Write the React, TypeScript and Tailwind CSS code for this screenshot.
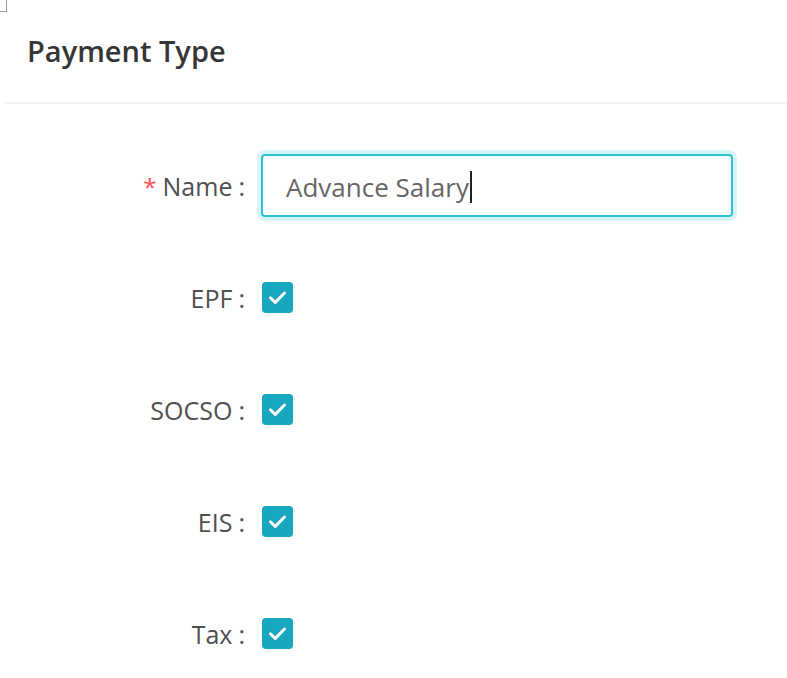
import React from "react";

const font = { fontFamily: '"Open Sans", "Noto Sans", sans-serif' };

function Check() {
  return (
    <span className="flex h-[31px] w-[31px] items-center justify-center rounded-[4px] bg-[#17a7bf]">
      <svg width="31" height="31" viewBox="0 0 31 31" fill="none">
        <path d="M8.5 15.8 L13.3 20.4 L22.5 11" stroke="white" strokeWidth="3" strokeLinecap="round" strokeLinejoin="round" />
      </svg>
    </span>
  );
}

function Label({ text, required }: { text: string; required?: boolean }) {
  return (
    <div className="flex w-[256px] shrink-0 items-center justify-end pt-[4px] text-[25px] text-[#505050]">
      {required && <span className="mr-[6px] text-[24px] text-[#ff4d4f]">*</span>}
      <span>{text}</span>
      <span className="ml-[6px] mr-[16px]">:</span>
    </div>
  );
}

export default function App() {
  const rows = ["EPF", "SOCSO", "EIS", "Tax"];
  return (
    <div className="relative min-h-[678px] w-[787px] bg-white" style={font}>
      <div className="absolute left-0 top-0 h-[12px] w-[7px] border-b border-r border-[#9a9a9a]" />
      <div className="ml-[5px]">
        <div className="flex h-[104px] items-center border-b-2 border-[#f0f0f0] pl-[22px]">
          <h1 className="text-[29px] font-semibold text-[#363636]">Payment Type</h1>
        </div>
        <div className="flex flex-col gap-[48px] pt-[49px]">
          <div className="flex h-[64px] items-center">
            <Label text="Name" required />
            <div className="flex h-[63px] w-[472px] items-center rounded-[4px] border-2 border-[#2bc3d6] pl-[23px] pt-[4px] text-[26px] text-[#666] shadow-[0_0_0_4px_rgba(43,195,214,0.18)]">
              <span>Advance Salary</span>
              <span className="ml-[1px] h-[32px] w-[2px] bg-[#222]" />
            </div>
          </div>
          {rows.map((r) => (
            <div key={r} className="flex h-[64px] items-center">
              <Label text={r} />
              <div className="ml-[1px]">
                <Check />
              </div>
            </div>
          ))}
        </div>
      </div>
    </div>
  );
}
